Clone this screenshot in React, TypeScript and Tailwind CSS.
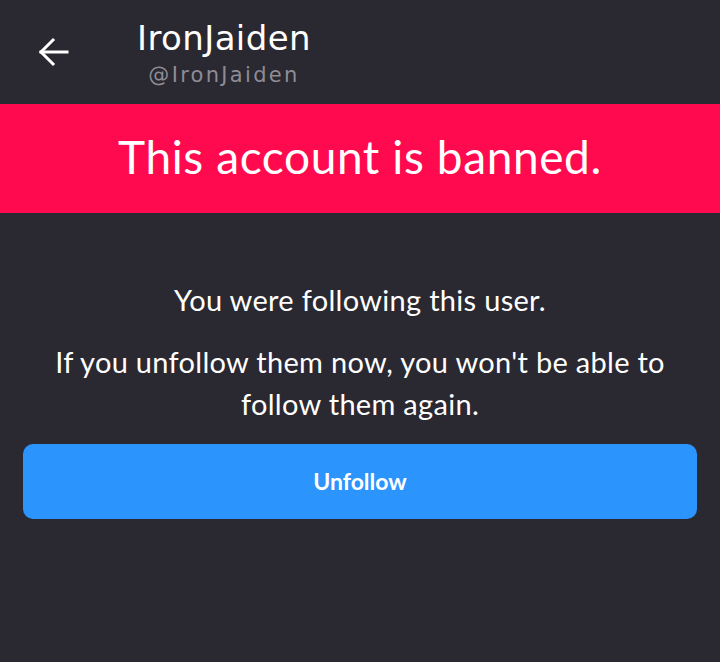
export default function App() {
  return (
    <div className="w-[720px] h-[662px] bg-[#2a2831] text-white flex flex-col" style={{ fontFamily: "Lato, 'Noto Sans', sans-serif" }}>
      <header className="h-[104px] flex items-start">
        <button className="ml-[36px] mt-[35px] w-[34px] h-[34px] flex items-center justify-center">
          <svg width="32" height="32" viewBox="0 0 32 32" fill="none" stroke="white" strokeWidth="3" strokeLinecap="square">
            <path d="M30 16H4" />
            <path d="M16 4L4 16L16 28" />
          </svg>
        </button>
        <div className="ml-[67px] mt-[18px] flex flex-col items-center" style={{ fontFamily: "'DejaVu Sans', 'Noto Sans', sans-serif" }}>
          <div className="text-[34px] leading-[40px] tracking-[0.4px] text-white">IronJaiden</div>
          <div className="mt-[3px] text-[21px] leading-[28px] tracking-[2.3px] text-[#8e8c95]">@IronJaiden</div>
        </div>
      </header>
      <div className="h-[109px] bg-[#ff0a4e] flex items-center justify-center pb-[4px]">
        <span className="text-[46px] leading-none text-white tracking-[0.6px]">This account is banned.</span>
      </div>
      <div className="flex flex-col items-center text-center mt-[66px] text-[29px] leading-[42px] tracking-[0.3px]">
        <p>You were following this user.</p>
        <p className="mt-[20px] w-[630px]">If you unfollow them now, you won't be able to follow them again.</p>
      </div>
      <div className="px-[23px] mt-[19px]">
        <button className="w-full h-[75px] rounded-[10px] bg-[#2b94fd] text-white font-bold text-[23px]">Unfollow</button>
      </div>
    </div>
  );
}
